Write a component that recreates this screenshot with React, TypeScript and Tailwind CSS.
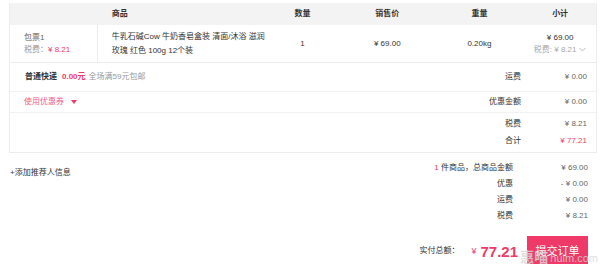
const pink = 'text-[#f03a6a]';

const summary = [
  { label: '优惠', value: '- ¥ 0.00' },
  { label: '运费', value: '¥ 0.00' },
  { label: '税费', value: '¥ 8.21' },
];

export default function App() {
  return (
    <div
      className="relative w-[600px] h-[264px] overflow-hidden bg-white text-[8px] leading-none text-[#333]"
      style={{ fontFamily: '"Liberation Sans", "Noto Sans CJK SC", sans-serif' }}
    >
      <div className="pt-[3px] pl-[9px]">
        {/* order table */}
        <div className="w-[588px] border border-t-0 border-[#ececec]">
          {/* header */}
          <div className="flex h-[22px] items-center bg-[#f3f3f3] font-bold">
            <div className="w-[88px]" />
            <div className="w-[168px] pl-[14px]">商品</div>
            <div className="w-[75px] text-center">数量</div>
            <div className="w-[95px] text-center">销售价</div>
            <div className="w-[90px] text-center">重量</div>
            <div className="w-[72px] text-center">小计</div>
          </div>

          {/* product row */}
          <div className="flex h-[38px] items-center border-b border-[#ececec]">
            <div className="flex h-full w-[88px] flex-col justify-center gap-[4px] border-r border-[#ececec] pl-[14px] text-[#666]">
              <span>包票1</span>
              <span className="text-[#999]">
                税费：<span className={pink}>¥ 8.21</span>
              </span>
            </div>
            <div className="w-[168px] pl-[14px] leading-[14px]">
              牛乳石碱Cow 牛奶香皂盒装 清面/沐浴 滋润
              <br />
              玫瑰 红色 100g 12个装
            </div>
            <div className="w-[75px] text-center">1</div>
            <div className="w-[95px] text-center">¥ 69.00</div>
            <div className="w-[90px] text-center">0.20kg</div>
            <div className="flex w-[72px] flex-col items-center gap-[4px]">
              <span>¥ 69.00</span>
              <span className="flex items-center gap-[3px] text-[#aaa]">
                税费: ¥ 8.21
                <svg width="7" height="5" viewBox="0 0 7 5" fill="none" stroke="#aaa" strokeWidth="0.8">
                  <path d="M0.5 1l3 3 3-3" />
                </svg>
              </span>
            </div>
          </div>

          {/* shipping */}
          <div className="flex h-[29px] items-center border-b border-[#f2f2f2]">
            <div className="flex flex-1 items-center pl-[15px]">
              <span className="font-bold">普通快递</span>
              <span className={`ml-[5px] font-bold ${pink}`}>0.00元</span>
              <span className="ml-[3px] text-[#999]">全场满59元包邮</span>
            </div>
            <span>运费</span>
            <span className="w-[75px] pr-[9px] text-right text-[#666]">¥ 0.00</span>
          </div>

          {/* coupon */}
          <div className="flex h-[21px] items-center border-b border-[#f2f2f2]">
            <div className="flex flex-1 items-center pl-[14px] text-[#f2608a]">
              使用优惠券
              <svg className="ml-[7px]" width="6" height="4" viewBox="0 0 6 4">
                <path d="M0 0h6L3 4z" fill="#f03a6a" />
              </svg>
            </div>
            <span>优惠金额</span>
            <span className="w-[75px] pr-[9px] text-right text-[#666]">¥ 0.00</span>
          </div>

          {/* totals */}
          <div className="flex h-[39px] flex-col justify-center gap-[9px]">
            <div className="flex justify-end">
              <span>税费</span>
              <span className="w-[75px] pr-[9px] text-right text-[#666]">¥ 8.21</span>
            </div>
            <div className="flex justify-end">
              <span>合计</span>
              <span className={`w-[75px] pr-[9px] text-right ${pink}`}>¥ 77.21</span>
            </div>
          </div>
        </div>
      </div>

      {/* summary */}
      <div className="flex pl-[10px] pr-[12px] pt-[11px]">
        <div className="flex-1 pt-[5px]">+添加推荐人信息</div>
        <div className="flex flex-col gap-[8px]">
          <div className="flex justify-end">
            <span>
              <span className={pink}>1</span> 件商品，总商品金额
            </span>
            <span className="w-[75px] text-right text-[#666]">¥ 69.00</span>
          </div>
          {summary.map((s) => (
            <div key={s.label} className="flex justify-end">
              <span>{s.label}</span>
              <span className="w-[75px] text-right text-[#666]">{s.value}</span>
            </div>
          ))}
        </div>
      </div>

      {/* pay bar */}
      <div className="mt-[16px] flex items-center justify-end pr-[12px]">
        <span className="text-[#333]">实付总额：</span>
        <span className={`ml-[12px] text-[9px] ${pink}`}>¥</span>
        <span className={`ml-[4px] text-[15px] font-bold ${pink}`}>77.21</span>
        <button className="ml-[9px] h-[30px] w-[61px] bg-[#ef3a69] text-[11px] text-white">提交订单</button>
      </div>

      {/* watermark */}
      <div className="pointer-events-none absolute bottom-[0px] right-[2px] flex items-end gap-[2px] text-[#d8d8d8] opacity-80">
        <span className="text-[14px] font-bold leading-none">惠喵</span>
        <span className="text-[11px] leading-none">huim.com</span>
      </div>
    </div>
  );
}
